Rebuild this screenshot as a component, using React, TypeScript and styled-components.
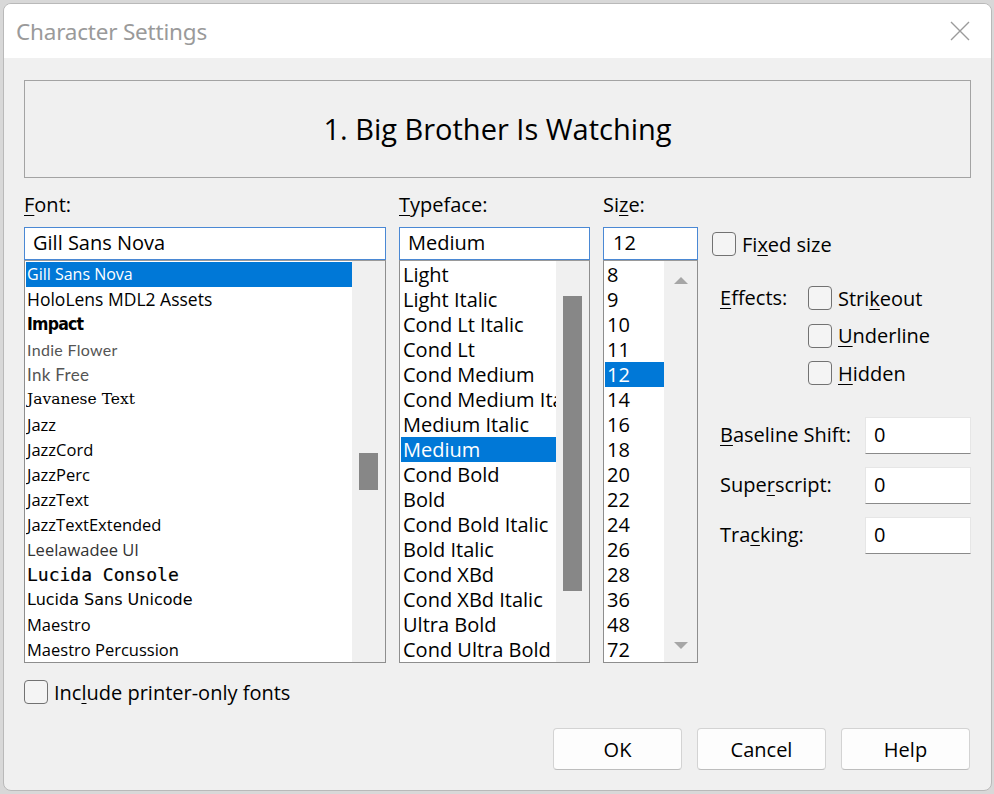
import React from "react";
import styled, { createGlobalStyle } from "styled-components";

const GlobalStyle = createGlobalStyle`
  html, body { margin: 0; padding: 0; background: #d8d8d8; }
  body { font-family: "Open Sans", "Noto Sans", sans-serif; color: #000; }
  * { box-sizing: border-box; }
`;

const Dialog = styled.div`
  margin: 3px 0 0 3px;
  width: 989px;
  height: 788px;
  border: 1px solid #b9b9b9;
  border-radius: 8px;
  overflow: hidden;
  display: flex;
  flex-direction: column;
  background: #f0f0f0;
`;

const TitleBar = styled.div`
  height: 54px;
  flex: none;
  background: #fff;
  display: flex;
  align-items: center;
  justify-content: space-between;
  padding: 0 20px 0 12px;
`;

const Title = styled.div`
  font-family: "Noto Sans", "Open Sans", sans-serif;
  font-size: 22.5px;
  color: #9a9a9a;
  letter-spacing: -0.2px;
`;

const CloseButton = styled.div`
  width: 22px;
  height: 22px;
  display: flex;
  align-items: center;
  justify-content: center;
`;

const Content = styled.div`
  flex: 1;
  display: flex;
  flex-direction: column;
  padding: 22px 20px 0 20px;
`;

const Preview = styled.div`
  height: 98px;
  border: 1px solid #a3a3a3;
  display: flex;
  align-items: center;
  justify-content: center;
  font-size: 29px;
  padding-bottom: 2px;
`;

const MainRow = styled.div`
  display: flex;
  gap: 13px;
`;

const Column = styled.div<{ $width: number }>`
  width: ${(p) => p.$width}px;
  flex: none;
  display: flex;
  flex-direction: column;
`;

const Label = styled.div`
  margin-top: 15px;
  height: 24px;
  line-height: 24px;
  font-size: 20px;
`;

const Key = styled.span`
  text-decoration: underline;
  text-underline-offset: 3px;
  text-decoration-thickness: 1px;
`;

const TextInput = styled.div<{ $pad: number }>`
  margin-top: 10px;
  height: 33px;
  border: 1px solid #4a88d4;
  background: #fff;
  padding-left: ${(p) => p.$pad}px;
  font-size: 20px;
  line-height: 30px;
`;

const ListBox = styled.div`
  height: 403px;
  border: 1px solid #8e8e8e;
  border-top-color: #9a9a9a;
  background: #fff;
  display: flex;
`;

const Items = styled.div`
  flex: 1;
  min-width: 0;
  padding: 1px 0 0 1px;
  overflow: hidden;
`;

const Item = styled.div<{ $selected?: boolean }>`
  height: 25px;
  line-height: 25px;
  padding-left: 2px;
  white-space: nowrap;
  overflow: hidden;
  font-size: 20px;
  background: ${(p) => (p.$selected ? "#0078d7" : "transparent")};
  color: ${(p) => (p.$selected ? "#fff" : "#000")};
`;

const FontItem = styled(Item)<{
  $family: string;
  $size: number;
  $weight?: number;
  $color?: string;
  $stretch?: string;
  $spacing?: number;
  $stroke?: number;
}>`
  padding-left: 1px;
  font-family: ${(p) => p.$family}, sans-serif;
  font-size: ${(p) => p.$size}px;
  font-weight: ${(p) => p.$weight ?? 400};
  font-stretch: ${(p) => p.$stretch ?? "normal"};
  letter-spacing: ${(p) => p.$spacing ?? 0}px;
  -webkit-text-stroke: ${(p) => p.$stroke ?? 0}px currentColor;
  color: ${(p) => (p.$selected ? "#fff" : p.$color ?? "#000")};
`;

const ScrollTrack = styled.div`
  width: 33px;
  flex: none;
  background: #f0f0f0;
  display: flex;
  flex-direction: column;
  align-items: center;
`;

const Thumb = styled.div<{ $top: number; $height: number }>`
  margin-top: ${(p) => p.$top}px;
  width: 19px;
  height: ${(p) => p.$height}px;
  background: #878787;
`;

const ArrowTrack = styled(ScrollTrack)`
  justify-content: space-between;
  padding: 16px 0 13px;
`;

const Arrow = styled.div<{ $down?: boolean }>`
  width: 0;
  height: 0;
  border-left: 7px solid transparent;
  border-right: 7px solid transparent;
  ${(p) =>
    p.$down
      ? "border-top: 7px solid #a6a6a6;"
      : "border-bottom: 7px solid #a6a6a6;"}
`;

const RightPanel = styled.div`
  width: 259px;
  flex: none;
  padding-top: 54px;
  margin-left: 1px;
  display: flex;
  flex-direction: column;
`;

const CheckRow = styled.div`
  display: flex;
  align-items: center;
  gap: 6px;
  height: 24px;
  font-size: 20px;
`;

const Box = styled.div`
  width: 24px;
  height: 24px;
  flex: none;
  border: 1px solid #727272;
  border-radius: 4px;
  background: #f4f4f4;
`;

const EffectsGrid = styled.div`
  margin: 30px 0 0 8px;
  display: grid;
  grid-template-columns: 88px auto;
  row-gap: 13.5px;
`;

const EffectsLabel = styled.div`
  grid-column: 1;
  grid-row: 1;
  font-size: 20px;
  line-height: 24px;
`;

const EffectsCheck = styled(CheckRow)<{ $row: number }>`
  grid-column: 2;
  grid-row: ${(p) => p.$row};
`;

const FieldsGrid = styled.div`
  margin: 32px 0 0 8px;
  display: grid;
  grid-template-columns: 145px 106px;
  grid-auto-rows: 37px;
  row-gap: 13px;
`;

const FieldLabel = styled.div`
  align-self: center;
  font-size: 20px;
  padding-bottom: 2px;
`;

const NumberInput = styled.div`
  background: #fff;
  border: 1px solid #e6e6e6;
  border-bottom-color: #8a8a8a;
  padding-left: 8px;
  font-size: 20px;
  line-height: 33px;
`;

const PrinterRow = styled(CheckRow)`
  margin-top: 17px;
`;

const ButtonRow = styled.div`
  margin-top: 24px;
  display: flex;
  justify-content: flex-end;
  gap: 15px;
  padding-right: 1px;
`;

const Button = styled.div`
  width: 129px;
  height: 42px;
  border: 1px solid #d3d3d3;
  border-bottom-color: #bdbdbd;
  border-radius: 4px;
  background: #fdfdfd;
  display: flex;
  align-items: center;
  justify-content: center;
  font-size: 20px;
`;

type FontEntry = {
  name: string;
  family: string;
  size: number;
  weight?: number;
  color?: string;
  stretch?: string;
  spacing?: number;
  stroke?: number;
  selected?: boolean;
};

const OS = '"Open Sans"';
const fonts: FontEntry[] = [
  { name: "Gill Sans Nova", family: OS, size: 16, selected: true },
  { name: "HoloLens MDL2 Assets", family: OS, size: 17.5 },
  { name: "Impact", family: '"DejaVu Sans Condensed", "DejaVu Sans"', size: 17.5, weight: 800, stretch: "condensed", spacing: -0.8 },
  { name: "Indie Flower", family: '"Lato"', size: 16, weight: 400, color: "#555", spacing: 0.3 },
  { name: "Ink Free", family: '"Lato"', size: 17, weight: 400, color: "#555", spacing: 0.3 },
  { name: "Javanese Text", family: '"DejaVu Serif"', size: 15.5 },
  { name: "Jazz", family: OS, size: 16.5 },
  { name: "JazzCord", family: OS, size: 16.5 },
  { name: "JazzPerc", family: OS, size: 16.5 },
  { name: "JazzText", family: OS, size: 16.5 },
  { name: "JazzTextExtended", family: OS, size: 16.5 },
  { name: "Leelawadee UI", family: OS, size: 16.5, color: "#333" },
  { name: "Lucida Console", family: '"DejaVu Sans Mono"', size: 18, stroke: 0.2 },
  { name: "Lucida Sans Unicode", family: '"DejaVu Sans"', size: 16 },
  { name: "Maestro", family: OS, size: 16.5 },
  { name: "Maestro Percussion", family: OS, size: 16.5 },
];

const typefaces = [
  "Light",
  "Light Italic",
  "Cond Lt Italic",
  "Cond Lt",
  "Cond Medium",
  "Cond Medium Italic",
  "Medium Italic",
  "Medium",
  "Cond Bold",
  "Bold",
  "Cond Bold Italic",
  "Bold Italic",
  "Cond XBd",
  "Cond XBd Italic",
  "Ultra Bold",
  "Cond Ultra Bold",
];

const sizes = ["8", "9", "10", "11", "12", "14", "16", "18", "20", "22", "24", "26", "28", "36", "48", "72"];

export default function App() {
  return (
    <>
      <GlobalStyle />
      <Dialog>
        <TitleBar>
          <Title>Character Settings</Title>
          <CloseButton>
            <svg width="20" height="20" viewBox="0 0 20 20">
              <path d="M1 1 L19 19 M19 1 L1 19" stroke="#9b9b9b" strokeWidth="1.4" fill="none" />
            </svg>
          </CloseButton>
        </TitleBar>
        <Content>
          <Preview>1. Big Brother Is Watching</Preview>
          <MainRow>
            <Column $width={362}>
              <Label>
                <Key>F</Key>ont:
              </Label>
              <TextInput $pad={8}>Gill Sans Nova</TextInput>
              <ListBox>
                <Items>
                  {fonts.map((f) => (
                    <FontItem
                      key={f.name}
                      $selected={f.selected}
                      $family={f.family}
                      $size={f.size}
                      $weight={f.weight}
                      $color={f.color}
                      $stretch={f.stretch}
                      $spacing={f.spacing}
                      $stroke={f.stroke}
                    >
                      {f.name}
                    </FontItem>
                  ))}
                </Items>
                <ScrollTrack>
                  <Thumb $top={192} $height={37} />
                </ScrollTrack>
              </ListBox>
            </Column>
            <Column $width={191}>
              <Label>
                <Key>T</Key>ypeface:
              </Label>
              <TextInput $pad={8}>Medium</TextInput>
              <ListBox>
                <Items>
                  {typefaces.map((t) => (
                    <Item key={t} $selected={t === "Medium"}>
                      {t}
                    </Item>
                  ))}
                </Items>
                <ScrollTrack>
                  <Thumb $top={35} $height={295} />
                </ScrollTrack>
              </ListBox>
            </Column>
            <Column $width={95}>
              <Label>
                Si<Key>z</Key>e:
              </Label>
              <TextInput $pad={9}>12</TextInput>
              <ListBox>
                <Items>
                  {sizes.map((s) => (
                    <Item key={s} $selected={s === "12"}>
                      {s}
                    </Item>
                  ))}
                </Items>
                <ArrowTrack>
                  <Arrow />
                  <Arrow $down />
                </ArrowTrack>
              </ListBox>
            </Column>
            <RightPanel>
              <CheckRow>
                <Box />
                <span>
                  Fi<Key>x</Key>ed size
                </span>
              </CheckRow>
              <EffectsGrid>
                <EffectsLabel>
                  <Key>E</Key>ffects:
                </EffectsLabel>
                <EffectsCheck $row={1}>
                  <Box />
                  <span>
                    Stri<Key>k</Key>eout
                  </span>
                </EffectsCheck>
                <EffectsCheck $row={2}>
                  <Box />
                  <span>
                    <Key>U</Key>nderline
                  </span>
                </EffectsCheck>
                <EffectsCheck $row={3}>
                  <Box />
                  <span>
                    <Key>H</Key>idden
                  </span>
                </EffectsCheck>
              </EffectsGrid>
              <FieldsGrid>
                <FieldLabel>
                  <Key>B</Key>aseline Shift:
                </FieldLabel>
                <NumberInput>0</NumberInput>
                <FieldLabel>
                  Supe<Key>r</Key>script:
                </FieldLabel>
                <NumberInput>0</NumberInput>
                <FieldLabel>
                  Tra<Key>c</Key>king:
                </FieldLabel>
                <NumberInput>0</NumberInput>
              </FieldsGrid>
            </RightPanel>
          </MainRow>
          <PrinterRow>
            <Box />
            <span>
              Inc<Key>l</Key>ude printer-only fonts
            </span>
          </PrinterRow>
          <ButtonRow>
            <Button>OK</Button>
            <Button>Cancel</Button>
            <Button>Help</Button>
          </ButtonRow>
        </Content>
      </Dialog>
    </>
  );
}
